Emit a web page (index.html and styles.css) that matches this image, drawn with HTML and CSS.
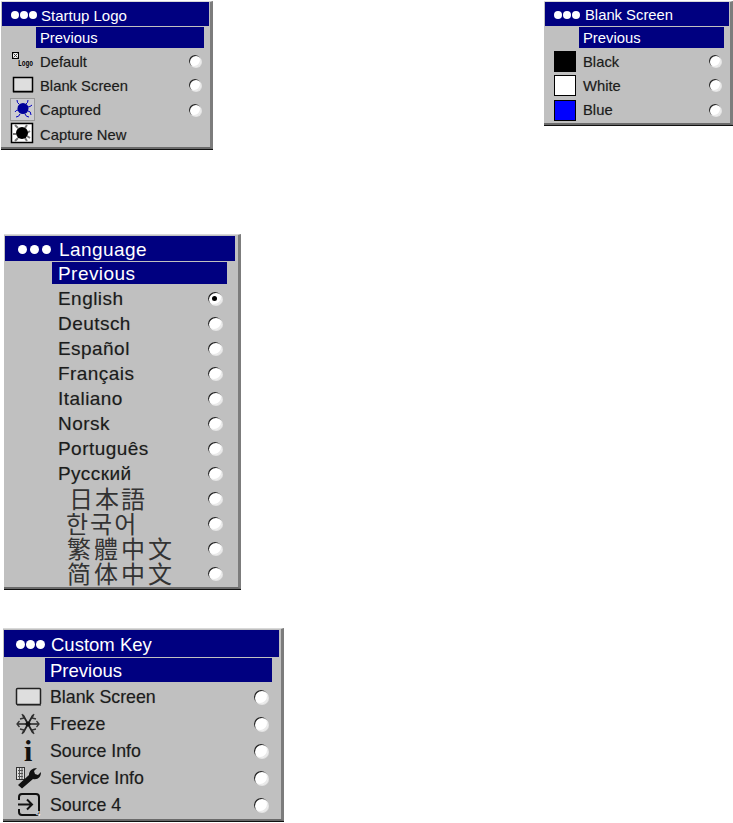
FILE: index.html
```html
<!DOCTYPE html>
<html lang="en">
<head>
<meta charset="UTF-8" />
<title>Projector menus</title>
<link rel="stylesheet" href="styles.css">
</head>
<body>

<div class="top-row">
  <div class="panel startup">
    <div class="title"><span class="dots"><i></i><i></i><i></i></span><span>Startup Logo</span></div>
    <div class="prev">Previous</div>
    <div class="row">
      <svg class="icon" width="28" height="24" viewBox="0 0 28 24">
        <rect x="2.500" y="3.500" width="6" height="6" fill="#eee" stroke="#000"/>
        <path d="M3.500 4.500l4 4M7.500 4.500l-4 4" stroke="#444"/>
        <text x="8" y="17" class="logo-word" textLength="15" lengthAdjust="spacingAndGlyphs">Logo</text>
      </svg>
      <span class="label">Default</span><span class="radio"></span>
    </div>
    <div class="row">
      <svg class="icon" width="28" height="22" viewBox="0 0 28 22">
        <rect x="3.500" y="3.500" width="19" height="14" fill="#dedede" stroke="#000" stroke-width="1.500"/>
        <path d="M3 18.500h20" stroke="#555"/>
      </svg>
      <span class="label">Blank Screen</span><span class="radio"></span>
    </div>
    <div class="row">
      <svg class="icon" width="28" height="24" viewBox="0 0 28 24">
        <rect x="0.500" y="0.500" width="24" height="22" fill="#cdcdd2" stroke="#999"/>
        <circle cx="13" cy="10.500" r="5.500" fill="#00009a"/>
        <path d="M9 6Q7 5 7 2M16 6q2-1 2-4M18 9q2 0 4-2M18 13q3 0 3 4M15 16q1 3 4 3M10 16q-1 3-4 3M8 12q-2 0-3 2" fill="none" stroke="#0000c0"/>
      </svg>
      <span class="label">Captured</span><span class="radio"></span>
    </div>
    <div class="row">
      <svg class="icon" width="28" height="24" viewBox="0 0 28 24">
        <rect x="1.500" y="1.500" width="21" height="19" fill="#fff" stroke="#000" stroke-width="1.500"/>
        <path d="M5 3l3 3M17 3l-2 3M20 9l-3 2M20 16l-3-2M17 19l-2-3M5 19l3-3M3 12l3 0" fill="none" stroke="#777" stroke-width="2"/>
        <circle cx="12" cy="11" r="6" fill="#000"/>
      </svg>
      <span class="label">Capture New</span>
    </div>
  </div>

  <div class="panel blank">
    <div class="title"><span class="dots"><i></i><i></i><i></i></span><span>Blank Screen</span></div>
    <div class="prev">Previous</div>
    <div class="row"><span class="swatch black"></span><span class="label">Black</span><span class="radio"></span></div>
    <div class="row"><span class="swatch white"></span><span class="label">White</span><span class="radio"></span></div>
    <div class="row"><span class="swatch blue"></span><span class="label">Blue</span><span class="radio"></span></div>
  </div>
</div>

<div class="panel language">
  <div class="title"><span class="dots"><i></i><i></i><i></i></span><span>Language</span></div>
  <div class="prev">Previous</div>
  <div class="row"><span class="label">English</span><span class="radio on"></span></div>
  <div class="row"><span class="label">Deutsch</span><span class="radio"></span></div>
  <div class="row"><span class="label">Español</span><span class="radio"></span></div>
  <div class="row"><span class="label">Français</span><span class="radio"></span></div>
  <div class="row"><span class="label">Italiano</span><span class="radio"></span></div>
  <div class="row"><span class="label">Norsk</span><span class="radio"></span></div>
  <div class="row"><span class="label">Português</span><span class="radio"></span></div>
  <div class="row"><span class="label">Русский</span><span class="radio"></span></div>
  <div class="row"><span class="label cjk ja" lang="ja">日本語</span><span class="radio"></span></div>
  <div class="row"><span class="label cjk ko" lang="ko">한국어</span><span class="radio"></span></div>
  <div class="row"><span class="label cjk tc" lang="zh-Hant">繁體中文</span><span class="radio"></span></div>
  <div class="row"><span class="label cjk sc" lang="zh-Hans">简体中文</span><span class="radio"></span></div>
</div>

<div class="panel custom">
  <div class="title"><span class="dots"><i></i><i></i><i></i></span><span>Custom Key</span></div>
  <div class="prev">Previous</div>
  <div class="row">
    <svg class="icon" width="34" height="24" viewBox="0 0 34 24">
      <rect x="1.500" y="3.500" width="24" height="16" rx="1" fill="#dedede" stroke="#222" stroke-width="1.500"/>
      <path d="M2 20.500h24" stroke="#666"/>
    </svg>
    <span class="label">Blank Screen</span><span class="radio"></span>
  </div>
  <div class="row">
    <svg class="icon" width="34" height="26" viewBox="0 0 34 26">
      <path d="M2 13h22M8 4l10 18M18 4L8 22" stroke="#222" stroke-width="1.700" fill="none"/>
      <path d="M4.500 10l-2.500 3 2.500 3M21.500 10l2.500 3-2.500 3M5 8l4-1-2-4M21 8l-4-1 2-4M5 18l4 1-2 4M21 18l-4 1 2 4" stroke="#333" stroke-width="1.300" fill="none"/>
      <circle cx="13" cy="13" r="2.500" fill="#111"/>
    </svg>
    <span class="label">Freeze</span><span class="radio"></span>
  </div>
  <div class="row">
    <span class="icon info">i</span>
    <span class="label">Source Info</span><span class="radio"></span>
  </div>
  <div class="row">
    <svg class="icon" width="34" height="26" viewBox="0 0 34 26">
      <rect x="1.500" y="2.500" width="8" height="12" fill="#ddd" stroke="#333"/>
      <path d="M3 5.500h5M3 8.500h5M3 11.500h5M4.500 3v11M7 3v11" stroke="#555"/>
      <path d="M3 20L14 10c0-4 3-7 8-7l-3 3 1 3 3 1 3-3c0 5-3 8-8 7L7 23.500z" fill="#111"/>
    </svg>
    <span class="label">Service Info</span><span class="radio"></span>
  </div>
  <div class="row">
    <svg class="icon" width="34" height="26" viewBox="0 0 34 26">
      <path d="M4 8V5q0-3 3-3h14q3 0 3 3v15q0 3-3 3H7q-3 0-3-3v-3" fill="none" stroke="#111" stroke-width="2"/>
      <path d="M3 12.500h13M12 7.500l5 5-5 5" fill="none" stroke="#111" stroke-width="2"/>
      <text x="21" y="24" class="port-num">4</text>
    </svg>
    <span class="label">Source 4</span><span class="radio"></span>
  </div>
</div>

</body>
</html>
```

FILE: styles.css
```css
html, body {
  margin: 0;
  padding: 0;
  background: #fff;
  font-family: "Liberation Sans", Arial, sans-serif;
  color: #1c1c1c;
}
body {
  width: 733px;
  height: 823px;
  overflow: hidden;
}
.top-row {
  display: flex;
  justify-content: space-between;
  align-items: flex-start;
  padding-top: 1px;
  padding-left: 1px;
}

.panel {
  box-sizing: border-box;
  background: #c0c0c0;
  border-top: 1px solid #d8d8d8;
  border-right: 3px solid #7c7c7c;
  border-bottom: 2px solid #6a6a6a;
  box-shadow: 0 1px 0 #111;
}
.title {
  display: flex;
  align-items: center;
  background: #000080;
  color: #fff;
  box-sizing: border-box;
  padding-top: 2px;
}
.dots {
  display: flex;
}
.dots i {
  display: block;
  border-radius: 50%;
  background: #fff;
}
.prev {
  background: #000080;
  color: #fff;
  box-sizing: border-box;
  padding-top: 1px;
}
.row {
  display: flex;
  align-items: center;
  position: relative;
}
.icon {
  position: absolute;
  flex: none;
  overflow: visible;
}
.label {
  flex: 1;
  white-space: nowrap;
  padding-top: 1px;
  text-shadow: 0 0 1px rgba(0, 0, 0, 0.3);
}
.radio {
  flex: none;
  box-sizing: border-box;
  border-radius: 50%;
  background: #fff;
  box-shadow: inset 1px 1px 0 #222, inset -1px -1px 0 #e8e8e8, 1px 1px 0 #e4e4e4;
  position: relative;
}
.radio.on::after {
  content: "";
  position: absolute;
  left: 4px;
  top: 4px;
  width: 5px;
  height: 5px;
  border-radius: 50%;
  background: #000;
}

/* startup logo */
.startup {
  width: 212px;
  font-size: 14.8px;
  padding-bottom: 1px;
}
.startup .title {
  height: 24px;
  font-size: 15px;
  margin: 0 1px 1px 1px;
  padding-left: 9px;
}
.startup .dots,
.blank .dots {
  gap: 1px;
}
.startup .dots {
  margin-right: 4px;
}
.blank .dots {
  margin-right: 5px;
}
.startup .dots i,
.blank .dots i {
  width: 8px;
  height: 8px;
}
.startup .prev {
  height: 21px;
  line-height: 20px;
  margin-left: 35px;
  margin-right: 6px;
  padding-left: 4px;
}
.startup .row {
  height: 24.3px;
  padding-left: 39px;
  padding-right: 9px;
}
.startup .prev + .row {
  margin-top: 1px;
}
.startup .icon {
  left: 9px;
}
.startup .radio,
.blank .radio {
  width: 12px;
  height: 12px;
}

/* blank screen */
.blank {
  width: 189px;
  font-size: 14.8px;
  padding-bottom: 1px;
}
.blank .title {
  height: 24px;
  font-size: 14.8px;
  margin: 0 1px 1px 1px;
  padding-left: 9px;
}
.blank .prev {
  height: 21px;
  line-height: 20px;
  margin-left: 35px;
  margin-right: 6px;
  padding-left: 4px;
}
.blank .row {
  height: 24.3px;
  padding-left: 39px;
  padding-right: 9px;
}
.blank .prev + .row {
  margin-top: 1px;
}
.swatch {
  position: absolute;
  left: 10px;
  top: 2px;
  width: 22px;
  height: 21px;
  box-sizing: border-box;
  border: 1px solid #000;
}
.swatch.black { background: #000; }
.swatch.white { background: #fff; }
.swatch.blue { background: #0000ff; }

/* language */
.language {
  width: 237px;
  margin-top: 85px;
  margin-left: 4px;
  font-size: 19px;
  letter-spacing: 0.45px;
  padding-bottom: 1px;
}
.language .title {
  height: 25px;
  font-size: 19px;
  margin: 1px 3px 1px 1px;
  padding-left: 13px;
}
.language .dots {
  gap: 3px;
  margin-right: 8px;
}
.language .dots i {
  width: 9px;
  height: 9px;
}
.language .prev {
  height: 22px;
  line-height: 21px;
  margin-left: 48px;
  margin-right: 11px;
  padding-left: 6px;
}
.language .row {
  height: 25px;
  padding-left: 54px;
  padding-right: 16px;
}
.language .prev + .row {
  margin-top: 2px;
}
.language .radio {
  width: 14px;
  height: 13px;
}
.language .cjk {
  font-family: "Noto Sans CJK SC", "Noto Sans CJK JP", sans-serif;
  font-size: 24px;
  line-height: 25px;
  letter-spacing: 2px;
  color: #333;
  padding-top: 0;
  padding-bottom: 3px;
  text-shadow: none;
}
.language .cjk.ja { padding-left: 11px; }
.language .cjk.ko { padding-left: 8px; }
.language .cjk.tc { padding-left: 9px; letter-spacing: 3px; }
.language .cjk.sc { padding-left: 9px; letter-spacing: 3px; }

/* custom key */
.custom {
  width: 281px;
  margin-top: 39px;
  margin-left: 3px;
  font-size: 17.800px;
  padding-bottom: 1px;
}
.custom .title {
  height: 27px;
  font-size: 18.500px;
  margin: 1px 2px 1px 1px;
  padding-left: 12px;
}
.custom .dots {
  gap: 1px;
  margin-right: 6px;
}
.custom .dots i {
  width: 9px;
  height: 9px;
}
.custom .prev {
  height: 24px;
  line-height: 23px;
  margin-left: 42px;
  margin-right: 9px;
  padding-left: 5px;
  font-size: 18.500px;
}
.custom .row {
  height: 27px;
  padding-left: 47px;
  padding-right: 13px;
}
.custom .prev + .row {
  margin-top: 1px;
}
.custom .icon {
  left: 12px;
}
.custom .radio {
  width: 14px;
  height: 14px;
}
.custom .info {
  left: 21px;
  font-family: "Liberation Serif", serif;
  font-weight: bold;
  font-size: 30px;
  line-height: 27px;
  color: #111;
}
.logo-word {
  font-family: "Liberation Mono", monospace;
  font-weight: bold;
  font-size: 9px;
  fill: #000;
}
.port-num {
  font-family: "Liberation Sans", sans-serif;
  font-size: 8px;
  fill: #fff;
}
```
